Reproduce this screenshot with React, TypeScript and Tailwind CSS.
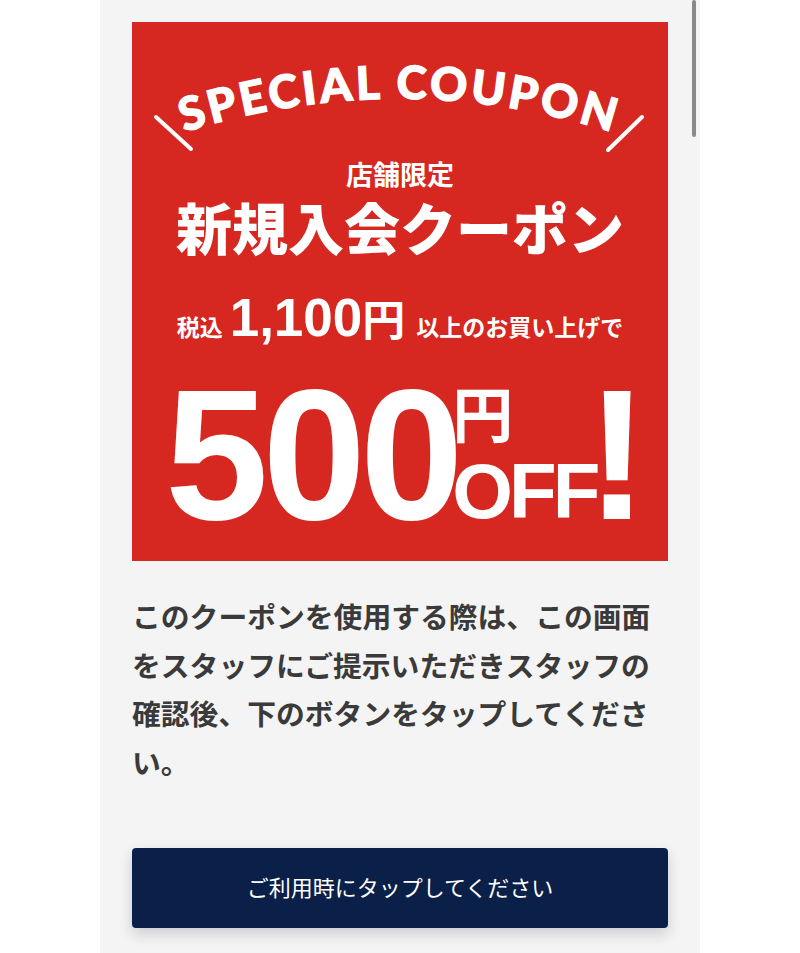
const cjk = "font-[Noto_Sans_CJK_JP,sans-serif]";
const num = "font-[Liberation_Sans,Arial,sans-serif]";

function CouponCard() {
  return (
    <div className="flex h-[539px] w-full flex-col items-center bg-[#d62720] text-white">
      {/* arched heading */}
      <svg width="536" height="138" className="block shrink-0 overflow-visible">
        <defs>
          <path id="coupon-arc" d="M -30 142.6 A 700 700 0 0 1 562 142.6" fill="none" />
        </defs>
        <line x1="24" y1="95" x2="59" y2="127" stroke="#fff" strokeWidth="4" strokeLinecap="round" />
        <line x1="510" y1="95" x2="476" y2="128" stroke="#fff" strokeWidth="4" strokeLinecap="round" />
        <text
          fill="#fff"
          stroke="#fff"
          strokeWidth="1.2"
          fontFamily="Lato, 'Noto Sans', sans-serif"
          fontWeight="900"
          fontSize="46"
        >
          <textPath
            href="#coupon-arc"
            startOffset="50%"
            textAnchor="middle"
            textLength={434}
            lengthAdjust="spacing"
          >
            SPECIAL COUPON
          </textPath>
        </text>
      </svg>

      <div className={`${cjk} text-[27px] font-bold leading-none`}>店舗限定</div>
      <div className={`${cjk} mt-[11px] whitespace-nowrap text-[56px] font-black leading-none`}>
        新規入会クーポン
      </div>

      {/* condition */}
      <div className="mt-[37px] flex items-baseline whitespace-nowrap">
        <span className={`${cjk} text-[23px] font-bold leading-none`}>税込</span>
        <span className={`${num} ml-[7px] text-[53px] font-bold leading-none`}>1,100</span>
        <span className={`${cjk} text-[43px] font-bold leading-none`}>円</span>
        <span className={`${cjk} ml-[11px] text-[23px] font-bold leading-none`}>以上のお買い上げで</span>
      </div>

      {/* discount */}
      <div className="mt-[18px] flex w-full items-end pl-[33px]">
        <span className={`${num} text-[186px] font-bold leading-none tracking-[-6px]`}>500</span>
        <div className="mb-[18px] -ml-[5px] flex flex-col">
          <span className={`${cjk} text-[61px] font-bold leading-none`}>円</span>
          <span className={`${num} mt-[10px] text-[78px] font-bold leading-none tracking-[-4px]`}>OFF</span>
        </div>
        <span className={`${num} -ml-[10px] text-[186px] font-bold leading-none`}>!</span>
      </div>
    </div>
  );
}

export default function App() {
  return (
    <div className="min-h-screen bg-white">
      <div className="relative mx-auto min-h-[953px] w-[600px] bg-[#f4f4f4] px-8 pb-10 pt-[22px]">
        {/* scrollbar thumb */}
        <div className="absolute right-[4px] top-0 h-[137px] w-[4px] rounded-full bg-[#8a8a8a]" />

        <CouponCard />

        <p className={`${cjk} mt-[31px] text-[28.8px] font-bold leading-[48.5px] text-[#3a3a3a]`}>
          このクーポンを使用する際は、この画面をスタッフにご提示いただきスタッフの確認後、下のボタンをタップしてください。
        </p>

        <button
          type="button"
          className={`${cjk} mt-[62px] flex h-[80px] w-full items-center justify-center rounded-[4px] bg-[#0b2049] pb-[3px] text-[22px] text-white shadow-[0_6px_14px_rgba(20,30,60,0.18)]`}
        >
          ご利用時にタップしてください
        </button>
      </div>
    </div>
  );
}
